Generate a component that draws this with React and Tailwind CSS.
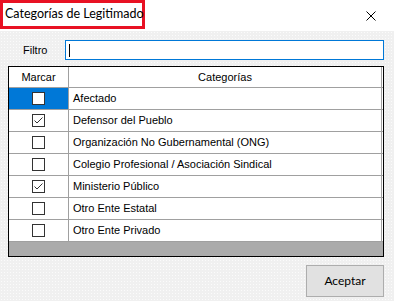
import React from "react";

const rows = [
  { label: "Afectado", checked: false, selected: true },
  { label: "Defensor del Pueblo", checked: true },
  { label: "Organización No Gubernamental (ONG)", checked: false },
  { label: "Colegio Profesional / Asociación Sindical", checked: false },
  { label: "Ministerio Público", checked: true },
  { label: "Otro Ente Estatal", checked: false },
  { label: "Otro Ente Privado", checked: false },
];

function CheckBox({ checked }) {
  return (
    <div className="w-[13px] h-[13px] border border-[#333333] bg-white flex items-center justify-center">
      {checked && (
        <svg width="11" height="11" viewBox="0 0 11 11">
          <path d="M1.5 5.5 L4 8 L9.5 2.5" fill="none" stroke="#333333" strokeWidth="1" />
        </svg>
      )}
    </div>
  );
}

export default function App() {
  return (
    <div className="w-[394px] h-[301px] flex flex-col bg-white overflow-hidden font-['Liberation_Sans',Arial,sans-serif] text-black">
      {/* Title bar */}
      <div className="h-[31px] flex items-start justify-between bg-white">
        <div className="w-[145px] h-[29px] border-[3px] border-[#e81123] flex items-center pl-[2px] whitespace-nowrap font-['Lato',sans-serif] text-[12.5px] text-black">
          Categorías de Legitimado
        </div>
        <div className="w-[46px] h-[31px] flex items-center justify-center">
          <svg width="10" height="10" viewBox="0 0 10 10">
            <path d="M0.5 0.5 L9.5 9.5 M9.5 0.5 L0.5 9.5" stroke="#000" strokeWidth="1" />
          </svg>
        </div>
      </div>

      {/* Body */}
      <div className="flex-1 flex flex-col bg-[#f0f0f0] bg-[radial-gradient(circle,#fbfbfb_0.7px,transparent_0.9px)] bg-[length:3px_3px] pt-[9px] pl-[8px] pr-[10px]">
        <div className="flex items-center h-[20px]">
          <span className="w-[57px] pl-[15px] text-[11px]">Filtro</span>
          <div className="flex-1 h-[20px] border border-[#0078d7] bg-white flex items-center pl-[3px]">
            <div className="w-px h-[13px] bg-black" />
          </div>
        </div>

        {/* Grid */}
        <div className="mt-[6px] h-[191px] border border-black bg-[#ababab] flex flex-col text-[11px]">
          <div className="h-[21px] flex bg-white border-b border-[#a0a0a0] shrink-0">
            <div className="w-[60px] border-r border-[#a0a0a0] flex items-center justify-center">Marcar</div>
            <div className="flex-1 border-r border-[#a0a0a0] flex items-center justify-center mr-[1px]">Categorías</div>
          </div>
          {rows.map((r) => (
            <div key={r.label} className="h-[22px] flex bg-white border-b border-[#a0a0a0] shrink-0">
              <div
                className={`w-[60px] border-r border-[#a0a0a0] flex items-center justify-center ${
                  r.selected ? "bg-[#0078d7]" : "bg-white"
                }`}
              >
                <CheckBox checked={r.checked} />
              </div>
              <div className="flex-1 border-r border-[#a0a0a0] flex items-center pl-[4px] mr-[1px]">{r.label}</div>
            </div>
          ))}
        </div>

        <div className="flex justify-end mt-[8px]">
          <button className="w-[78px] h-[32px] bg-[#e1e1e1] border border-[#adadad] text-[12px] font-['Lato',sans-serif]">
            Aceptar
          </button>
        </div>
      </div>
    </div>
  );
}
